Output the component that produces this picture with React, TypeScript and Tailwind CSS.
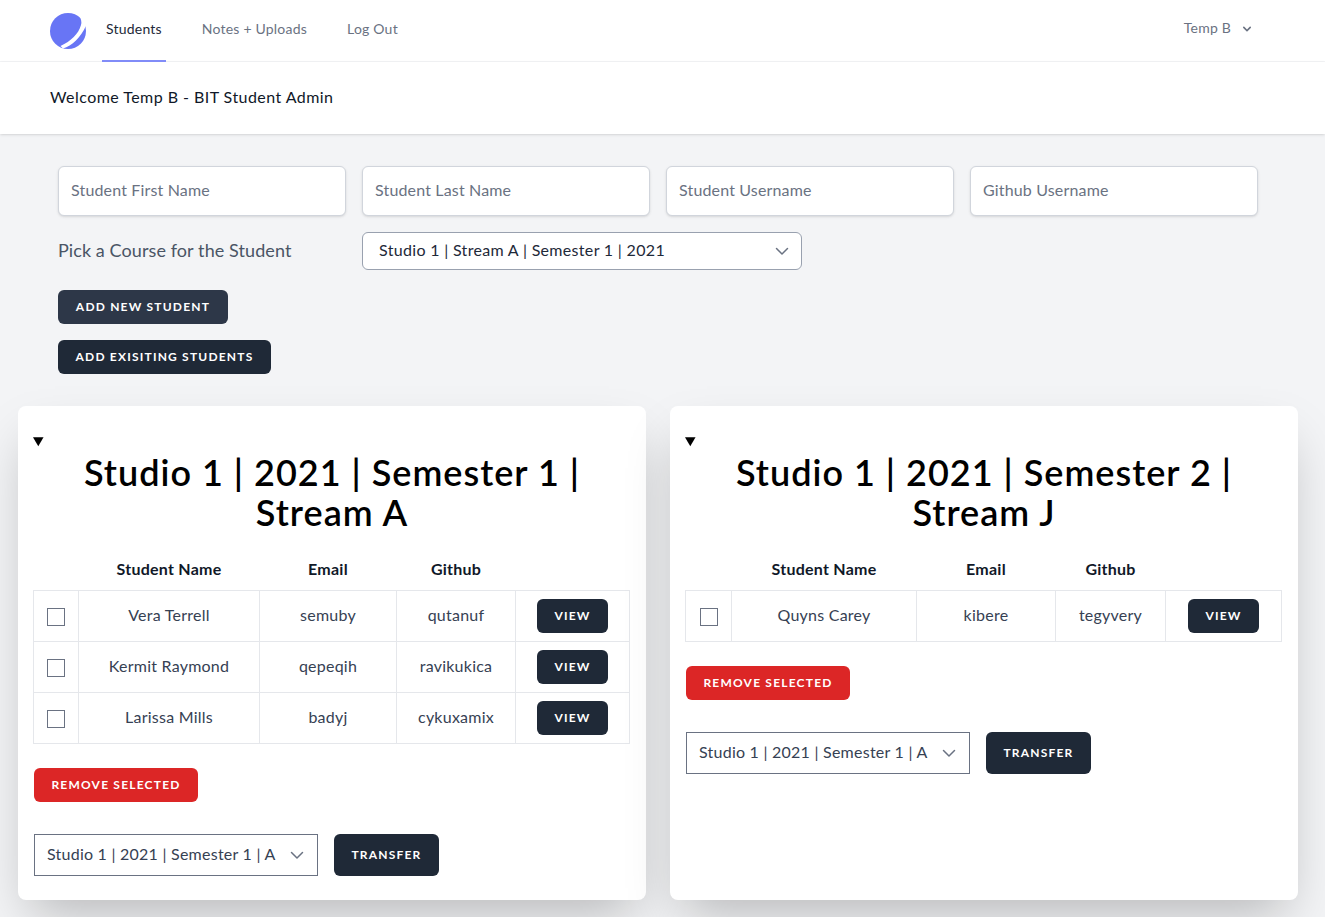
import React from "react";

const FONT = "font-['Lato','Noto_Sans',sans-serif]";

function NavChevron({ className }: { className?: string }) {
  return (
    <svg viewBox="0 0 20 20" fill="currentColor" className={className}>
      <path fillRule="evenodd" d="M5.293 7.293a1 1 0 011.414 0L10 10.586l3.293-3.293a1 1 0 111.414 1.414l-4 4a1 1 0 01-1.414 0l-4-4a1 1 0 010-1.414z" clipRule="evenodd" />
    </svg>
  );
}

function SelectChevron({ className }: { className?: string }) {
  return (
    <svg viewBox="0 0 20 20" fill="none" className={className}>
      <path d="M4.5 7.5l5.5 5.5 5.5-5.5" stroke="currentColor" strokeWidth="1.5" strokeLinecap="round" strokeLinejoin="round" />
    </svg>
  );
}

function Logo() {
  return (
    <svg viewBox="0 0 36 36" className="w-9 h-9 shrink-0">
      <circle cx="18" cy="18" r="18" fill="#6875f5" />
      <path d="M28.5 1 C31 5 32 9 31 12 C28.5 21 21 28 10.5 33 L13 35.5 C22 33 31 24 35.9 13 L36.5 0 Z" fill="#ffffff" />
    </svg>
  );
}

function Button({ children, color = "bg-[#1f2937]", className = "" }: { children: React.ReactNode; color?: string; className?: string }) {
  return (
    <button className={`inline-flex items-center justify-center ${color} rounded-md px-4 text-xs font-bold tracking-widest uppercase text-white ${className}`}>
      {children}
    </button>
  );
}

type Row = { name: string; email: string; github: string };

function CourseCard({ title1, title2, rows, widths }: { title1: string; title2: string; rows: Row[]; widths: number[] }) {
  return (
    <div className="w-[628px] h-[494px] bg-white rounded-lg shadow-2xl px-[15px]">
      <details open>
        <summary className="h-[24px] pt-[23px] box-content text-base leading-6 text-black"></summary>
        <h1 className="text-4xl leading-10 font-semibold tracking-[0.028em] text-black text-center px-8 -mt-[1px]">
          {title1}
          <br />
          {title2}
        </h1>
        <table className="mt-[18px] table-fixed border-collapse text-base tracking-[0.015em] text-gray-700" style={{ width: widths.reduce((a, b) => a + b, 0) }}>
          <colgroup>
            {widths.map((w, i) => (
              <col key={i} style={{ width: w }} />
            ))}
          </colgroup>
          <thead>
            <tr className="h-10">
              <th></th>
              <th className="font-bold text-gray-900 pb-0.5">Student Name</th>
              <th className="font-bold text-gray-900 pb-0.5">Email</th>
              <th className="font-bold text-gray-900 pb-0.5">Github</th>
              <th></th>
            </tr>
          </thead>
          <tbody>
            {rows.map((r) => (
              <tr key={r.name} className="h-[51px]">
                <td className="border border-gray-200 text-center">
                  <input type="checkbox" className="appearance-none w-[18px] h-[18px] border border-gray-500 bg-white align-middle" />
                </td>
                <td className="border border-gray-200 text-center pb-0.5">{r.name}</td>
                <td className="border border-gray-200 text-center pb-0.5">{r.email}</td>
                <td className="border border-gray-200 text-center pb-0.5">{r.github}</td>
                <td className="border border-gray-200 text-center">
                  <Button className="h-[34px] w-[71px]">View</Button>
                </td>
              </tr>
            ))}
          </tbody>
        </table>
        <div className="mt-6 ml-px">
          <Button color="bg-[#dc2626]" className="h-[34px] w-[164px]">Remove Selected</Button>
        </div>
        <div className="mt-8 ml-px flex gap-4">
          <div className="w-[284px] h-[42px] border border-gray-500 flex items-center justify-between pl-3 pr-[10px] text-base tracking-[0.015em] text-gray-700 whitespace-nowrap">
            <span className="pb-px">Studio 1 | 2021 | Semester 1 | A</span>
            <SelectChevron className="w-5 h-5 text-gray-500 shrink-0" />
          </div>
          <Button className="h-[42px] w-[105px]">Transfer</Button>
        </div>
      </details>
    </div>
  );
}

export default function App() {
  return (
    <div className={`min-h-[917px] bg-[#f3f4f6] tracking-[0.02em] ${FONT}`}>
      <nav className="h-[62px] bg-white border-b border-gray-100 flex justify-between pl-[50px] pr-[70px]">
        <div className="flex items-center">
          <Logo />
          <div className="flex h-[62px] ml-4 gap-8 text-sm tracking-[0.015em]">
            <a className="flex items-center px-1 pb-0.5 border-b-2 border-[#818cf8] text-gray-800">Students</a>
            <a className="flex items-center px-1 pb-1 text-gray-500">Notes + Uploads</a>
            <a className="flex items-center px-1 pb-1 text-gray-500">Log Out</a>
          </div>
        </div>
        <div className="flex items-center gap-2 pb-1 text-sm tracking-[0.015em] text-gray-500">
          <span className="pb-0.5">Temp B</span>
          <NavChevron className="w-4 h-4" />
        </div>
      </nav>
      <header className="h-[72px] bg-white shadow flex items-center pl-[50px] pb-0.5 text-base tracking-[0.028em] text-gray-900">
        Welcome Temp B - BIT Student Admin
      </header>
      <main className="pt-8">
        <div className="mx-[58px] w-[1200px]">
          <div className="grid grid-cols-4 gap-4">
            {["Student First Name", "Student Last Name", "Student Username", "Github Username"].map((p) => (
              <input
                key={p}
                placeholder={p}
                className="h-[50px] bg-white rounded-md border border-gray-300 shadow-sm px-3 pb-1 text-base tracking-[0.01em] placeholder:text-gray-500 outline-none"
              />
            ))}
          </div>
          <div className="mt-4 grid grid-cols-4 gap-4 items-center">
            <div className="text-lg tracking-[0.005em] text-gray-600 pb-0.5">Pick a Course for the Student</div>
            <div className="col-span-3">
              <div className="w-[440px] h-[38px] bg-white rounded-md border border-gray-400 flex items-center justify-between pl-4 pr-[9px] text-base text-gray-800">
                <span className="pb-0.5">Studio 1 | Stream A | Semester 1 | 2021</span>
                <SelectChevron className="w-5 h-5 text-gray-500" />
              </div>
            </div>
          </div>
          <div className="mt-5">
            <Button color="bg-[#2d3748]" className="h-[34px] w-[170px]">Add New Student</Button>
          </div>
          <div className="mt-4">
            <Button className="h-[34px] w-[213px]">Add Exisiting Students</Button>
          </div>
        </div>
        <div className="mt-8 ml-[18px] flex gap-6">
          <CourseCard
            title1="Studio 1 | 2021 | Semester 1 |"
            title2="Stream A"
            widths={[45, 181, 137, 119, 114]}
            rows={[
              { name: "Vera Terrell", email: "semuby", github: "qutanuf" },
              { name: "Kermit Raymond", email: "qepeqih", github: "ravikukica" },
              { name: "Larissa Mills", email: "badyj", github: "cykuxamix" },
            ]}
          />
          <CourseCard
            title1="Studio 1 | 2021 | Semester 2 |"
            title2="Stream J"
            widths={[46, 185, 139, 110, 116]}
            rows={[{ name: "Quyns Carey", email: "kibere", github: "tegyvery" }]}
          />
        </div>
      </main>
    </div>
  );
}
